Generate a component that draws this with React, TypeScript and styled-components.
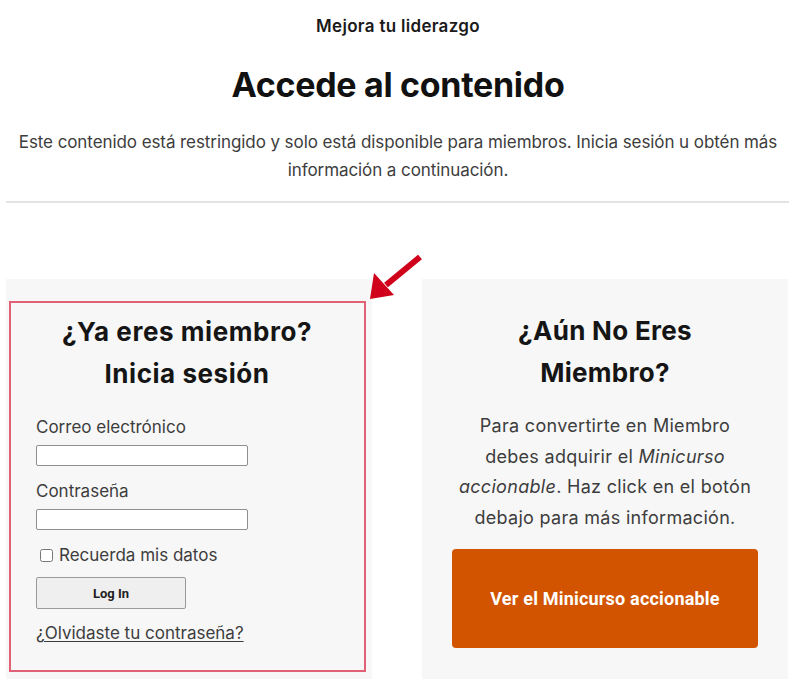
import React from 'react';
import styled, { createGlobalStyle } from 'styled-components';

const GlobalStyle = createGlobalStyle`
  body {
    margin: 0;
    background: #ffffff;
    font-family: Inter, 'Liberation Sans', sans-serif;
    color: #1a1a1a;
  }
`;

const Page = styled.div`
  width: 796px;
  padding-top: 14px;
`;

const Header = styled.header`
  display: flex;
  flex-direction: column;
  align-items: center;
  text-align: center;
`;

const Eyebrow = styled.div`
  font-size: 17px;
  font-weight: 600;
  line-height: 24px;
  letter-spacing: 0.3px;
  color: #1a1a1a;
`;

const Title = styled.h1`
  margin: 26px 0 0;
  font-size: 34px;
  font-weight: 700;
  line-height: 42px;
  letter-spacing: -0.3px;
  color: #111;
`;

const Intro = styled.p`
  margin: 22px 0 0;
  padding: 0 8px;
  font-size: 17px;
  line-height: 28px;
  letter-spacing: -0.08px;
  color: #3d3d3d;
`;

const Divider = styled.hr`
  margin: 17px 7px 0 6px;
  border: none;
  border-top: 2px solid #e4e4e4;
`;

const Cards = styled.div`
  position: relative;
  display: grid;
  grid-template-columns: 366px 366px;
  column-gap: 50px;
  margin: 76px 0 0 6px;
`;

const Card = styled.section<{ $pad: string }>`
  background: #f7f7f7;
  padding: ${(p) => p.$pad};
  min-height: 400px;
  box-sizing: border-box;
`;

const LoginBox = styled.div`
  border: 2px solid rgb(224, 96, 118);
  padding: 8px 0 20px 25px;
  min-height: 371px;
  box-sizing: border-box;
`;

const CardTitle = styled.h2`
  margin: 0;
  font-size: 26px;
  font-weight: 700;
  line-height: 42px;
  letter-spacing: 0.3px;
  text-align: center;
  color: #151515;
`;

const LoginTitle = styled(CardTitle)`
  margin-right: 26px;
  letter-spacing: 0.55px;
`;

const Form = styled.form`
  display: flex;
  flex-direction: column;
  margin-top: 21px;
`;

const Label = styled.label`
  font-size: 17px;
  line-height: 22px;
  color: #3d3d3d;
`;

const TextInput = styled.input`
  width: 212px;
  height: 21px;
  margin: 7px 0 14px;
  box-sizing: border-box;
  border: 1px solid #8f8f8f;
  border-radius: 2px;
  background: #fff;
`;

const RememberRow = styled.label`
  display: flex;
  align-items: center;
  gap: 6px;
  margin: 0 0 0 4px;
  font-size: 17px;
  line-height: 22px;
  color: #3d3d3d;
`;

const Checkbox = styled.input`
  width: 13px;
  height: 13px;
  margin: 0;
`;

const LoginButton = styled.button`
  width: 150px;
  height: 32px;
  margin-top: 11px;
  border: 1px solid #9a9a9a;
  border-radius: 2px;
  background: #efefef;
  font-family: Roboto, 'Liberation Sans', sans-serif;
  font-size: 13px;
  font-weight: 700;
  color: #222;
`;

const ForgotLink = styled.a`
  margin-top: 13px;
  font-size: 17px;
  line-height: 22px;
  color: #3d3d3d;
  text-decoration: underline;
  text-underline-offset: 2px;
`;

const JoinText = styled.p`
  margin: 17px 0 0;
  font-size: 18px;
  line-height: 30.5px;
  letter-spacing: 0.3px;
  text-align: center;
  color: #3d3d3d;
`;

const CtaButton = styled.a`
  display: flex;
  align-items: center;
  justify-content: center;
  height: 99px;
  margin: 16px 30px 0;
  border-radius: 4px;
  background: #d35400;
  color: #ffffff;
  font-family: Roboto, 'Liberation Sans', sans-serif;
  font-size: 18px;
  font-weight: 700;
  letter-spacing: 0.2px;
  text-decoration: none;
`;

const Arrow = styled.svg`
  position: absolute;
  left: 352px;
  top: -24px;
  width: 70px;
  height: 50px;
`;

export default function App() {
  return (
    <Page>
      <GlobalStyle />
      <Header>
        <Eyebrow>Mejora tu liderazgo</Eyebrow>
        <Title>Accede al contenido</Title>
        <Intro>
          Este contenido está restringido y solo está disponible para miembros. Inicia sesión u obtén más
          <br />
          información a continuación.
        </Intro>
      </Header>
      <Divider />
      <Cards>
        <Card $pad="22px 6px 6px 3px">
          <LoginBox>
            <LoginTitle>
              ¿Ya eres miembro?
              <br />
              Inicia sesión
            </LoginTitle>
            <Form onSubmit={(e) => e.preventDefault()}>
              <Label htmlFor="email">Correo electrónico</Label>
              <TextInput id="email" type="text" />
              <Label htmlFor="pass">Contraseña</Label>
              <TextInput id="pass" type="password" />
              <RememberRow>
                <Checkbox type="checkbox" />
                Recuerda mis datos
              </RememberRow>
              <LoginButton type="submit">Log In</LoginButton>
              <ForgotLink href="#">¿Olvidaste tu contraseña?</ForgotLink>
            </Form>
          </LoginBox>
        </Card>
        <Card $pad="31px 0 24px">
          <CardTitle>
            ¿Aún No Eres
            <br />
            Miembro?
          </CardTitle>
          <JoinText>
            Para convertirte en Miembro
            <br />
            debes adquirir el <em>Minicurso</em>
            <br />
            <em>accionable</em>. Haz click en el botón
            <br />
            debajo para más información.
          </JoinText>
          <CtaButton href="#">Ver el Minicurso accionable</CtaButton>
        </Card>
        <Arrow viewBox="0 0 70 50">
          <line x1="62" y1="2" x2="28" y2="30" stroke="#d0021b" strokeWidth="6" />
          <polygon points="12,44 16,18 36,40" fill="#d0021b" />
        </Arrow>
      </Cards>
    </Page>
  );
}
